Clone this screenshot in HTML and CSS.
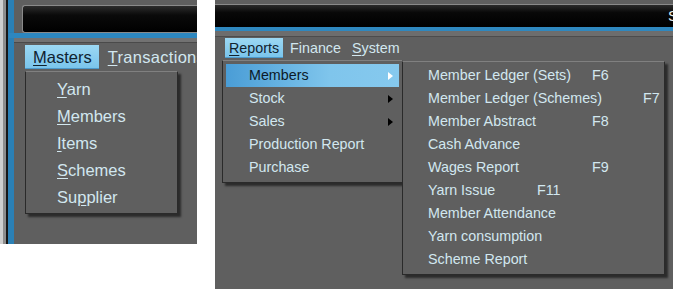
FILE: index.html
```html
<!DOCTYPE html>
<html>
<head>
    <title>Menus</title>
    <link rel="stylesheet" href="styles.css">
</head>
<body>
    <div class="shot shot-left">
        <div class="titlebar"></div>
        <div class="bluebar"></div>
        <div class="band"></div>
        <div class="menubar">
            <span class="top-item active"><u>M</u>asters</span>
            <span class="top-item"><u>T</u>ransactions</span>
        </div>
        <ul class="menu menu-masters">
            <li><u>Y</u>arn</li>
            <li><u>M</u>embers</li>
            <li><u>I</u>tems</li>
            <li><u>S</u>chemes</li>
            <li>Su<u>p</u>plier</li>
        </ul>
    </div>

    <div class="shot shot-right">
        <div class="titlebar"><span class="title">S</span></div>
        <div class="bluebar"></div>
        <div class="band"></div>
        <div class="menubar">
            <span class="top-item active"><u>R</u>eports</span>
            <span class="top-item">Finance</span>
            <span class="top-item"><u>S</u>ystem</span>
        </div>
        <div class="menus">
            <ul class="menu menu-reports">
                <li class="has-sub selected">Members</li>
                <li class="has-sub">Stock</li>
                <li class="has-sub">Sales</li>
                <li>Production Report</li>
                <li>Purchase</li>
            </ul>
            <ul class="menu menu-members">
                <li><span class="lbl-a">Member Ledger (Sets)</span>F6</li>
                <li><span class="lbl-b">Member Ledger (Schemes)</span>F7</li>
                <li><span class="lbl-a">Member Abstract</span>F8</li>
                <li>Cash Advance</li>
                <li><span class="lbl-a">Wages Report</span>F9</li>
                <li><span class="lbl-c">Yarn Issue</span>F11</li>
                <li>Member Attendance</li>
                <li>Yarn consumption</li>
                <li>Scheme Report</li>
            </ul>
        </div>
    </div>
</body>
</html>
```

FILE: styles.css
```css
body {
    margin: 0;
    background: #fff;
    display: flex;
    gap: 18px;
    font-family: "Liberation Sans", Arial, sans-serif;
}

ul {
    list-style: none;
    margin: 0;
    padding: 0;
}

u {
    text-decoration-thickness: 1px;
    text-underline-offset: 2px;
}

.shot {
    box-sizing: border-box;
    background: #5f5f5f;
    overflow: hidden;
    color: #d2e7ef;
}

/* left screenshot (bigger scale) */
.shot-left {
    width: 197px;
    height: 244px;
    padding-left: 14px;
    box-shadow: inset 3px 0 #cfcfcf, inset 6px 0 #8d8d8d, inset 8px 0 #161616, inset 14px 0 #2b80b5;
    background-color: #5f5f5f;
}

.shot-left .titlebar {
    margin: 5px 0 0 8px;
    height: 26px;
    border: 1px solid #8a8a8a;
    border-right: none;
    border-radius: 3px 0 0 3px;
    background: linear-gradient(#2c2c2c, #0a0a0a 35%, #000);
}

.shot-left .bluebar {
    margin-left: -5px;
    height: 5px;
    background: #2d87bf;
}

.shot-left .band {
    height: 4px;
    background: #727272;
    border-bottom: 1px solid #4a4a4a;
}

.shot-left .menubar {
    height: 28px;
    padding: 2px 0 0 11px;
    box-sizing: border-box;
    display: flex;
    gap: 1px;
    font-size: 16.5px;
    white-space: nowrap;
}

.shot-left .top-item {
    height: 24px;
    line-height: 24px;
    padding: 0 7px 0 8px;
    letter-spacing: 0.3px;
}

.shot-left .top-item.active {
    letter-spacing: 0;
}

.menubar .top-item.active {
    background: linear-gradient(#9cd8f3, #7ac5ec);
    color: #10222f;
    border-bottom: 1px solid #4d9acb;
    box-sizing: border-box;
}

.menu {
    background: #5f5f5f;
    border: 1px solid #2a2a2a;
    border-top-color: #808080;
    box-shadow: 3px 3px 2px rgba(0, 0, 0, 0.55);
}

.menu-masters {
    margin-left: 11px;
    width: 153px;
    height: 143px;
    box-sizing: border-box;
    padding-top: 4px;
    font-size: 16.5px;
}

.menu-masters li {
    height: 27px;
    line-height: 27px;
    padding-left: 31px;
}

/* right screenshot */
.shot-right {
    flex: 1;
    height: 289px;
}

.shot-right .titlebar {
    margin-top: 4px;
    height: 23px;
    border-top: 1px solid #8a8a8a;
    box-sizing: border-box;
    background: linear-gradient(#2a2a2a, #080808 35%, #000);
    display: flex;
    justify-content: flex-end;
}

.title {
    color: #e8eef0;
    font-size: 15px;
    line-height: 21px;
    margin-right: -5px;
}

.shot-right .bluebar {
    height: 4px;
    background: #2f88bf;
}

.shot-right .band {
    height: 5px;
    background: #6d6d6d;
    border-bottom: 1px solid #4c4c4c;
}

.shot-right .menubar {
    height: 23px;
    padding: 1px 0 0 10px;
    box-sizing: border-box;
    display: flex;
    gap: 3px;
    font-size: 14.3px;
}

.shot-right .top-item {
    height: 20px;
    line-height: 20px;
    padding: 0 4px;
}

.menus {
    display: flex;
    align-items: flex-start;
}

.menu-reports {
    margin-left: 7px;
    width: 181px;
    height: 123px;
    box-sizing: border-box;
    padding: 3px;
    font-size: 14.3px;
}

.menu-reports li {
    height: 23px;
    line-height: 23px;
    padding-left: 23px;
    display: flex;
    align-items: center;
}

.menu-reports li.selected {
    background: linear-gradient(90deg, #4a9dd6, #7fc5ec 60%, #86c9ee);
    color: #0c1a28;
}

.has-sub::after {
    content: "";
    margin-left: auto;
    margin-right: 6px;
    border-left: 5px solid #000;
    border-top: 4px solid transparent;
    border-bottom: 4px solid transparent;
}

.has-sub.selected::after {
    border-left-color: #fff;
}

.menu-members {
    margin: 1px 0 0 -1px;
    width: 263px;
    height: 214px;
    box-sizing: border-box;
    padding-top: 2px;
    font-size: 14.3px;
}

.menu-members li {
    height: 23px;
    line-height: 23px;
    padding-left: 25px;
    display: flex;
}

.lbl-a {
    width: 164px;
}

.lbl-b {
    width: 215px;
}

.lbl-c {
    width: 109px;
}
```
